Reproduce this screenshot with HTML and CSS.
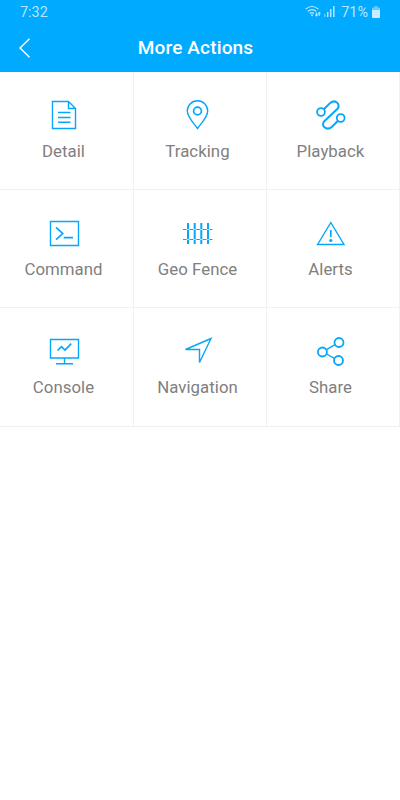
FILE: index.html
```html
<!DOCTYPE html>
<html lang="en">
<head>
<meta charset="utf-8">
<title>More Actions</title>
<link rel="stylesheet" href="styles.css">
</head>
<body>
<header class="top">
  <div class="status">
    <span class="time">7:32</span>
    <div class="indicators">
      <svg class="wifi" width="16" height="13" viewBox="0 0 16 13"><path d="M.7 4Q7 -1 13.3 4M2.8 6.3Q7 3 11.2 6.3M4.8 8.5Q7 6.8 9 8.5"/><circle cx="7" cy="10.3" r="1"/><path d="M11.5 11V7.5M10.3 9.7l1.2 1.3 1.2-1.3M14.2 7.5V11M13 8.800l1.200-1.300 1.200 1.300"/></svg>
      <svg class="signal" width="11" height="12" viewBox="0 0 11 12"><path class="weak" d="M.7 12V9"/><path d="M3.700 12V7M6.700 12V4M9.800 12V1"/></svg>
      <span class="percent">71%</span>
      <svg class="battery" width="8" height="12" viewBox="0 0 8 12"><path class="weak" d="M2.500 0h3v1.500H8V5H0V1.500h2.500z"/><path d="M0 4h8v7q0 1-1 1H1q-1 0-1-1z"/></svg>
    </div>
  </div>
  <div class="titlebar">
    <svg class="back" width="12" height="20" viewBox="0 0 12 20"><path d="M10.500 .7L1 10l9.500 9.300"/></svg>
    <h1>More Actions</h1>
  </div>
</header>
<main class="grid">
  <a class="cell"><svg class="icon" viewBox="0 0 31 32"><path d="M4.500 2.500H20.500L27.500 9.500V29.500H4.500zM20.500 2.500V9.500H27.500M10 13.500H22.500M10 18.500H22.500M10 23.300H22.500"/></svg><span>Detail</span></a>
  <a class="cell"><svg class="icon" viewBox="0 0 31 32"><path d="M15.500 29.500C12 24.500 5.300 18 5.300 12A10.200 10.200 0 0 1 25.700 12C25.700 18 19 24.500 15.500 29.500z"/><circle class="thick" cx="15.500" cy="12" r="3.900"/></svg><span>Tracking</span></a>
  <a class="cell"><svg class="icon bold" viewBox="0 0 31 32"><circle cx="6" cy="13" r="3.900"/><circle cx="25.700" cy="19" r="3.900"/><path class="route" d="M8.800 10.200L14.500 4.600C19.500 -.5 26.500 5 22.300 10L9.500 22C5 26.500 11.500 32.500 17 27.700L23 21.800"/></svg><span>Playback</span></a>
  <a class="cell"><svg class="icon" viewBox="0 0 31 32"><path d="M2.500 4.500H30.500V28.500H2.500z"/><path class="thick" d="M8 10.300L14.700 16.500L8 22.700M15.700 20.700H25"/></svg><span>Command</span></a>
  <a class="cell"><svg class="icon" viewBox="0 0 31 32"><path class="rail" d="M1 12.500H30.500M1 22.500H30.500"/><path class="post" d="M6 6V27M12.700 6V27M19.300 6V27M26 6V27"/><path class="knot" d="M4.500 12.500h3M11.200 12.500h3M17.800 12.500h3M24.500 12.500h3M4.500 22.500h3M11.200 22.500h3M17.800 22.500h3M24.500 22.500h3"/></svg><span>Geo Fence</span></a>
  <a class="cell"><svg class="icon" viewBox="0 0 31 32"><path d="M15.800 5.500L29 27.500H2.600z"/><path class="thick" d="M15.800 13V20"/><circle class="dot" cx="15.800" cy="23.500" r="1.600"/></svg><span>Alerts</span></a>
  <a class="cell"><svg class="icon" viewBox="0 0 31 32"><path d="M2.500 4.500H30.500V23H2.500zM16.500 23V28.500M8 28.700H25"/><path class="thick" d="M9.500 15.500L13.500 11.700L17 15L23.200 8.700"/></svg><span>Console</span></a>
  <a class="cell"><svg class="icon" viewBox="0 0 31 32"><path d="M29 3.500L3.500 14.500H17.500V27.500z"/></svg><span>Navigation</span></a>
  <a class="cell"><svg class="icon bold" viewBox="0 0 31 32"><circle cx="7.400" cy="17" r="4.500"/><circle cx="24" cy="7.500" r="4.500"/><circle cx="23.500" cy="25.500" r="4.500"/><path class="link" d="M11.500 14.600L20 9.700M11.500 19L19.500 23.400"/></svg><span>Share</span></a>
</main>
</body>
</html>
```
FILE: styles.css
```css
body {
  margin: 0;
  background: #fff;
  font-family: Roboto, sans-serif;
}

.top {
  height: 72px;
  background: #00aaff;
  color: #fff;
}

.status {
  display: flex;
  justify-content: space-between;
  height: 24px;
  padding: 0 20px;
  font-size: 14.4px;
  line-height: 25px;
  color: #b5e6ff;
}

.indicators {
  display: flex;
  align-items: center;
}

.wifi { fill: none; stroke: #b5e6ff; stroke-width: 1.1; margin: 0 3px 2px 0; }
.wifi circle { fill: #b5e6ff; stroke: none; }
.signal { fill: none; stroke: #b5e6ff; stroke-width: 1.5; margin: 0 6px 2px 0; }
.percent { margin-right: 4px; }
.battery { fill: #c8edff; margin-bottom: 1px; }
.weak { opacity: .5; }

.titlebar {
  display: grid;
  grid-template-columns: 1fr auto 1fr;
  align-items: center;
  height: 47px;
  padding: 0 24px 0 19px;
}

.back {
  fill: none;
  stroke: #fff;
  stroke-width: 1.4;
}

h1 {
  margin: 0;
  padding-right: 4px;
  grid-column: 2;
  font-size: 19px;
  font-weight: 500;
  line-height: 24px;
  letter-spacing: .15px;
}

.grid {
  display: grid;
  grid-template-columns: 134px 133px 133px;
  grid-template-rows: 118px 118px 119px;
}

.cell {
  display: grid;
  grid-template-columns: 127px;
  grid-template-rows: 32px 22px;
  row-gap: 9px;
  justify-items: center;
  padding-top: 27px;
  border-right: 1px solid #f1f1f1;
  border-bottom: 1px solid #f1f1f1;
}

.cell span {
  font-size: 16.8px;
  line-height: 22px;
  letter-spacing: .05px;
  color: #808080;
}

.icon {
  width: 31px;
  height: 32px;
  overflow: visible;
  fill: none;
  stroke: #06a6fb;
  stroke-width: 1.4;
}

.bold { stroke-width: 1.8; }
.route { stroke-width: 2; }
.thick { stroke-width: 1.7; }
.link { stroke-width: 1.4; }
.rail { stroke-width: 1; }
.post { stroke-width: 2; }
.knot { stroke: #b5e4ff; stroke-width: 1.2; }
.dot { fill: #06a6fb; stroke: none; }
```
